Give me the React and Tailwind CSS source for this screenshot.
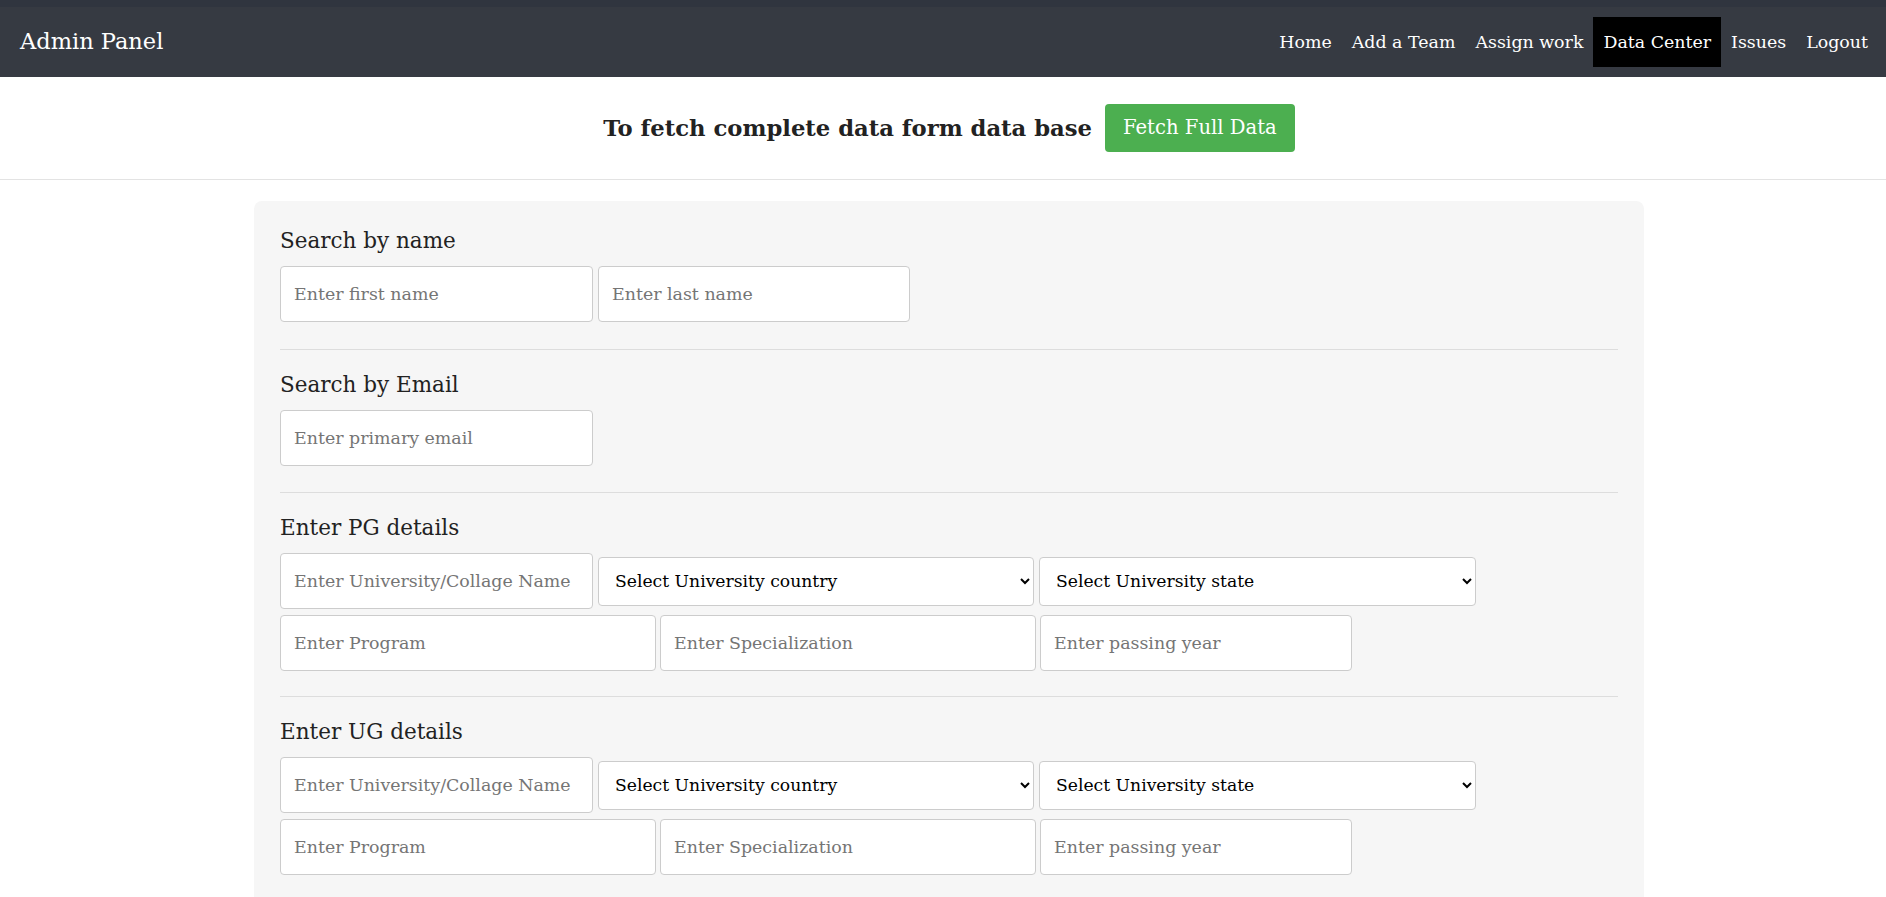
import React from "react";

function Field({ w, ph }) {
  return (
    <input
      placeholder={ph}
      className={`${w} h-[56px] rounded-[4px] border border-[#cccccc] bg-white pl-[13px] text-[17.4px] text-black placeholder:text-[#757575] outline-none`}
    />
  );
}

function Pick({ w, label }) {
  return (
    <select
      defaultValue=""
      className={`${w} h-[49px] rounded-[4px] border border-[#cccccc] bg-white pl-[12px] pr-[4px] text-[17.2px] text-black outline-none`}
    >
      <option value="">{label}</option>
    </select>
  );
}

function Heading({ children }) {
  return <h2 className="h-[32px] text-[21.5px] leading-[32px] text-[#222222]">{children}</h2>;
}

function Degree({ title }) {
  return (
    <section className="border-t border-[#dddddd] pt-[19px] pb-[25px]">
      <Heading>{title}</Heading>
      <div className="mt-[9px] flex flex-col gap-[6px]">
        <div className="flex items-center gap-[5px]">
          <Field w="w-[313px]" ph="Enter University/Collage Name" />
          <Pick w="w-[436px]" label="Select University country" />
          <Pick w="w-[437px]" label="Select University state" />
        </div>
        <div className="flex items-center gap-[4px]">
          <Field w="w-[376px]" ph="Enter Program" />
          <Field w="w-[376px]" ph="Enter Specialization" />
          <Field w="w-[312px]" ph="Enter passing year" />
        </div>
      </div>
    </section>
  );
}

export default function App() {
  const links = ["Home", "Add a Team", "Assign work", "Data Center", "Issues", "Logout"];
  return (
    <div className="min-h-[897px] bg-white font-['DejaVu_Serif',serif]">
      <nav className="flex h-[77px] items-center justify-between border-t-[7px] border-[#30353f] bg-[#363a42] pl-[20px] pr-[8px] text-white">
        <span className="text-[22.5px]">Admin Panel</span>
        <ul className="flex items-center">
          {links.map((l) => (
            <li
              key={l}
              className={`flex h-[50px] items-center px-[10px] text-[17.4px] ${l === "Data Center" ? "bg-black" : ""}`}
            >
              {l}
            </li>
          ))}
        </ul>
      </nav>

      <div className="flex h-[103px] items-center justify-center gap-[13px] border-b border-[#e3e3e3] pl-[12px]">
        <h1 className="text-[22.7px] font-bold text-[#222222]">To fetch complete data form data base</h1>
        <button className="h-[48px] rounded-[4px] bg-[#4caf50] px-[18px] text-[19.6px] text-white">
          Fetch Full Data
        </button>
      </div>

      <main className="ml-[254px] mt-[21px] w-[1390px] rounded-t-[8px] bg-[#f6f6f6] px-[26px] pt-[24px] pb-[40px]">
        <section className="pb-[27px]">
          <Heading>Search by name</Heading>
          <div className="mt-[9px] flex gap-[5px]">
            <Field w="w-[313px]" ph="Enter first name" />
            <Field w="w-[312px]" ph="Enter last name" />
          </div>
        </section>
        <section className="border-t border-[#dddddd] pt-[19px] pb-[26px]">
          <Heading>Search by Email</Heading>
          <div className="mt-[9px] flex">
            <Field w="w-[313px]" ph="Enter primary email" />
          </div>
        </section>
        <Degree title="Enter PG details" />
        <Degree title="Enter UG details" />
      </main>
    </div>
  );
}
